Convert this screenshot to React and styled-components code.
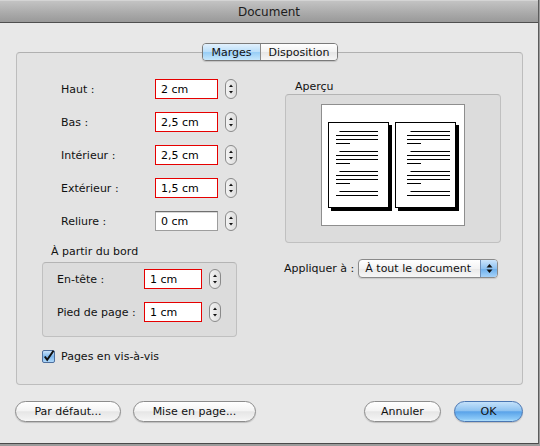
import React from "react";
import styled, { createGlobalStyle } from "styled-components";

const Global = createGlobalStyle`
  *, *::before, *::after { box-sizing: border-box; }
  html, body { margin: 0; padding: 0; }
  body {
    width: 540px; height: 446px; overflow: hidden;
    background: #9c9c9c;
    font-family: "DejaVu Sans", "Liberation Sans", sans-serif;
    font-size: 11px; color: #111;
  }
`;

const Window = styled.div`
  width: 539px; height: 444px;
  background: #e8e8e8;
  border-right: 1px solid #5c5c5c;
  border-bottom: 1px solid #4a4a4a;
  display: flex; flex-direction: column;
`;

const TitleBar = styled.div`
  flex: none;
  height: 23px;
  border-top: 1px solid #d4d4d4;
  border-bottom: 1px solid #4f4f4f;
  background: linear-gradient(#c3c3c3, #a9a9a9 60%, #999999);
  display: flex; align-items: center; justify-content: center;
  font-size: 12px; color: #1c1c1c; padding-top: 1px;
`;

const Content = styled.div`
  flex: none;
  display: flex; flex-direction: column; align-items: stretch;
  padding: 20px 15px 0 16px;
`;

const TabRow = styled.div`
  display: flex; justify-content: center; margin-bottom: -9px;
  position: relative; z-index: 1;
`;

const Tabs = styled.div`
  display: flex; height: 18px; border: 1px solid #7a7a7a; border-radius: 4px;
  overflow: hidden; box-shadow: 0 1px 1px rgba(0,0,0,0.15);
  margin-left: 1px;
`;

const Tab = styled.div`
  width: ${p => p.$w}px; display: flex; align-items: center; justify-content: center;
  font-size: 11px; color: #111;
  background: ${p => p.$active
    ? "linear-gradient(#e2f1fd, #b9defa 50%, #96cdf6 51%, #c6e7fc)"
    : "linear-gradient(#ffffff, #f2f2f2 50%, #e6e6e6 51%, #f6f6f6)"};
  & + & { border-left: 1px solid #8a8a8a; }
`;

const Panel = styled.div`
  height: 333px;
  border: 1px solid #bdbdbd; border-top-color: #b0b0b0;
  border-radius: 4px; background: #e3e3e3;
  display: grid; grid-template-columns: 195px 216px; column-gap: 48px;
  align-items: start;
  padding: 26px 0 0 25px;
`;

const Column = styled.div`
  display: flex; flex-direction: column; align-items: flex-start;
  padding-top: ${p => p.$top || 0}px;
`;

const Fields = styled.div`
  display: flex; flex-direction: column; gap: 13px;
`;

const FieldRow = styled.div`
  display: grid; align-items: center;
  grid-template-columns: ${p => p.$label}px ${p => p.$input}px 12px;
  column-gap: 7px; padding-left: ${p => p.$indent}px;
`;

const Label = styled.span`
  font-size: 11px; line-height: 13px; color: #111; white-space: nowrap;
`;

const Input = styled.div`
  height: 20px; background: #fff;
  border: 1px solid ${p => p.$error ? "#e60000" : "#9d9d9d"};
  ${p => !p.$error && "border-top-color: #707070; box-shadow: inset 0 1px 0 #d8d8d8;"}
  padding: 0 5px; display: flex; align-items: center; font-size: 11px; color: #000;
`;

const SpinBox = styled.div`
  width: 12px; height: 20px;
`;

const Spinner = () => (
  <SpinBox>
    <svg width="12" height="20" viewBox="0 0 12 20">
      <defs>
        <linearGradient id="spg" x1="0" x2="1" y1="0" y2="0">
          <stop offset="0" stopColor="#f4f4f4" />
          <stop offset="1" stopColor="#dcdcdc" />
        </linearGradient>
      </defs>
      <rect x="0.5" y="0.5" width="11" height="19" rx="5.5" fill="url(#spg)" stroke="#8a8a8a" />
      <path d="M4 8 L6 5.5 L8 8 Z" fill="#111" />
      <path d="M4 12 L6 14.5 L8 12 Z" fill="#111" />
    </svg>
  </SpinBox>
);

const GroupTitle = styled.div`
  font-size: 11px; line-height: 13px; color: #111;
  margin: ${p => p.$m};
`;

const GroupBox = styled.div`
  width: ${p => p.$w}px; height: ${p => p.$h}px;
  border: 1px solid #c0c0c0; border-top-color: #b4b4b4; border-radius: 4px;
  background: #dcdcdc;
  padding: ${p => p.$pad};
  display: flex; flex-direction: column;
  align-items: ${p => p.$center ? "center" : "stretch"};
`;

const CheckRow = styled.label`
  display: flex; align-items: center; gap: 6px; margin-top: 13px;
  font-size: 11px; line-height: 13px; color: #111;
`;

const CheckBox = styled.span`
  width: 13px; height: 13px; display: block;
`;

const Check = () => (
  <CheckBox>
    <svg width="13" height="13" viewBox="0 0 13 13">
      <defs>
        <linearGradient id="cbg" x1="0" x2="0" y1="0" y2="1">
          <stop offset="0" stopColor="#cfe6fb" />
          <stop offset="0.5" stopColor="#7fb8ee" />
          <stop offset="1" stopColor="#b3dbfb" />
        </linearGradient>
      </defs>
      <rect x="0.5" y="0.5" width="12" height="12" rx="1.5" fill="url(#cbg)" stroke="#4f6f9c" />
      <path d="M2.8 6.5 L5.2 9.8 L11.5 0.8" fill="none" stroke="#111" strokeWidth="2" />
    </svg>
  </CheckBox>
);

const Preview = styled.div`
  width: 144px; height: 122px;
  background: #fff; border: 1px solid #8e8e8e;
  display: flex; align-items: center; justify-content: center;
`;

const Page = ({ x, left, right }) => {
  const paras = [0, 20, 40];
  const lines = [];
  const L = x + left, R = x + 61 - right;
  paras.forEach((o, i) => {
    const y = 9.5 + o;
    lines.push(<line key={i + "a"} x1={L + 3.5} x2={R} y1={y} y2={y} />);
    lines.push(<line key={i + "b"} x1={L} x2={R} y1={y + 4} y2={y + 4} />);
    lines.push(<line key={i + "c"} x1={L} x2={R} y1={y + 8} y2={y + 8} />);
    lines.push(<line key={i + "d"} x1={L} x2={L + 14} y1={y + 12} y2={y + 12} />);
  });
  lines.push(<line key="z1" x1={L + 3.5} x2={R} y1={69.5} y2={69.5} />);
  lines.push(<line key="z2" x1={L} x2={R} y1={73.5} y2={73.5} />);
  return (
    <g>
      <rect x={x + 3} y={3} width={61} height={86} fill="#000" />
      <rect x={x + 0.5} y={0.5} width={60} height={85} fill="#fff" stroke="#000" />
      <g stroke="#000" strokeWidth="1">{lines}</g>
    </g>
  );
};

const PagesArt = () => (
  <svg width="131" height="89" viewBox="0 0 131 89" style={{ marginTop: 2 }}>
    <Page x={0} left={8} right={11} />
    <Page x={67} left={12} right={6} />
  </svg>
);

const ApplyRow = styled.div`
  display: flex; align-items: center; gap: 4px; margin: 16px 0 0 -1px;
`;

const Popup = styled.div`
  width: 140px; height: 19px;
  border: 1px solid #8a8a8a; border-radius: 4px; overflow: hidden;
  display: flex; background: linear-gradient(#ffffff, #f3f3f3 50%, #e8e8e8 51%, #f7f7f7);
  box-shadow: 0 1px 1px rgba(0,0,0,0.12);
`;

const PopupText = styled.span`
  flex: 1; display: flex; align-items: center; padding-left: 6px; font-size: 11px; color: #111;
`;

const PopupArrows = styled.span`
  width: 17px; display: flex; align-items: center; justify-content: center;
  border-left: 1px solid #6f8fb8;
  background: linear-gradient(#cbe4fb, #8ec2f2 50%, #6aaeec 51%, #a6d2f8);
`;

const Footer = styled.div`
  flex: none;
  display: flex; align-items: center; padding: 16px 15px 0 15px; gap: 12px;
`;

const Spacer = styled.div` flex: 1; `;

const Button = styled.div`
  width: ${p => p.$w}px; height: 21px;
  border-radius: 11px; border: 1px solid ${p => p.$primary ? "#4a76b2" : "#8c8c8c"};
  background: ${p => p.$primary
    ? "linear-gradient(#c4e1fa, #8fc3f1 45%, #5aa3e9 52%, #8ccaf8 90%, #b3e0fb)"
    : "linear-gradient(#ffffff, #f4f4f4 45%, #e6e6e6 52%, #f2f2f2 90%, #fafafa)"};
  box-shadow: 0 1px 1px rgba(0,0,0,0.18);
  display: flex; align-items: center; justify-content: center;
  font-size: 11px; color: #111;
  margin-left: ${p => p.$ml || 0}px;
`;

const topFields = [
  ["Haut :", "2 cm", true],
  ["Bas :", "2,5 cm", true],
  ["Intérieur :", "2,5 cm", true],
  ["Extérieur :", "1,5 cm", true],
  ["Reliure :", "0 cm", false],
];

const edgeFields = [
  ["En-tête :", "1 cm"],
  ["Pied de page :", "1 cm"],
];

export default function App() {
  return (
    <>
      <Global />
      <Window>
        <TitleBar>Document</TitleBar>
        <Content>
          <TabRow>
            <Tabs>
              <Tab $active $w={57}>Marges</Tab>
              <Tab $w={77}>Disposition</Tab>
            </Tabs>
          </TabRow>
          <Panel>
            <Column>
              <Fields>
                {topFields.map(([l, v, e]) => (
                  <FieldRow key={l} $label={87} $input={63} $indent={19}>
                    <Label>{l}</Label>
                    <Input $error={e}>{v}</Input>
                    <Spinner />
                  </FieldRow>
                ))}
              </Fields>
              <GroupTitle $m="14px 0 4px 9px">À partir du bord</GroupTitle>
              <GroupBox $w={195} $h={75} $pad="6px 0 0 14px">
                <Fields>
                  {edgeFields.map(([l, v]) => (
                    <FieldRow key={l} $label={80} $input={58} $indent={0}>
                      <Label>{l}</Label>
                      <Input $error>{v}</Input>
                      <Spinner />
                    </FieldRow>
                  ))}
                </Fields>
              </GroupBox>
              <CheckRow>
                <Check />
                Pages en vis-à-vis
              </CheckRow>
            </Column>
            <Column $top={1}>
              <GroupTitle $m="0 0 1px 10px">Aperçu</GroupTitle>
              <GroupBox $w={216} $h={149} $pad="9px 0 0 0" $center>
                <Preview>
                  <PagesArt />
                </Preview>
              </GroupBox>
              <ApplyRow>
                <Label>Appliquer à :</Label>
                <Popup>
                  <PopupText>À tout le document</PopupText>
                  <PopupArrows>
                    <svg width="7" height="11" viewBox="0 0 7 11">
                      <path d="M0.5 4.5 L3.5 1 L6.5 4.5 Z" fill="#111" />
                      <path d="M0.5 6.5 L3.5 10 L6.5 6.5 Z" fill="#111" />
                    </svg>
                  </PopupArrows>
                </Popup>
              </ApplyRow>
            </Column>
          </Panel>
        </Content>
        <Footer>
          <Button $w={106}>Par défaut...</Button>
          <Button $w={123}>Mise en page...</Button>
          <Spacer />
          <Button $w={77}>Annuler</Button>
          <Button $w={69} $primary $ml={1}>OK</Button>
        </Footer>
      </Window>
    </>
  );
}
